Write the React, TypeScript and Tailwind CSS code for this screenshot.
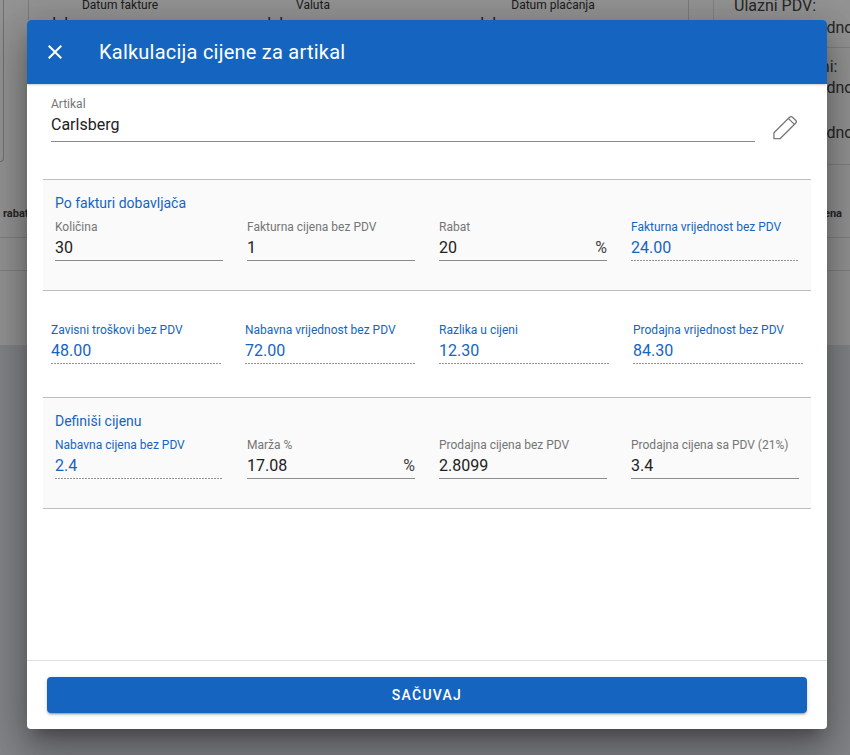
const FIRST_ROW = [
  { label: "Količina", value: "30" },
  { label: "Fakturna cijena bez PDV", value: "1" },
  { label: "Rabat", value: "20", suffix: "%" },
  { label: "Fakturna vrijednost bez PDV", value: "24.00", computed: true },
];

const SECOND_ROW = [
  { label: "Zavisni troškovi bez PDV", value: "48.00", computed: true },
  { label: "Nabavna vrijednost bez PDV", value: "72.00", computed: true },
  { label: "Razlika u cijeni", value: "12.30", computed: true },
  { label: "Prodajna vrijednost bez PDV", value: "84.30", computed: true },
];

const THIRD_ROW = [
  { label: "Nabavna cijena bez PDV", value: "2.4", computed: true },
  { label: "Marža %", value: "17.08", suffix: "%" },
  { label: "Prodajna cijena bez PDV", value: "2.8099" },
  { label: "Prodajna cijena sa PDV (21%)", value: "3.4" },
];

type FieldProps = {
  label: string;
  value: string;
  suffix?: string;
  computed?: boolean;
  tall?: boolean;
};

function Field({ label, value, suffix, computed, tall }: FieldProps) {
  return (
    <div className="min-w-0">
      <div
        className={`h-[15px] text-xs leading-[15px] whitespace-nowrap ${
          computed ? "text-[#1565c0]" : "text-[#757575]"
        }`}
      >
        {label}
      </div>
      <div
        className={`mt-[1px] flex h-[24px] items-center justify-between text-base leading-[24px] ${
          computed ? "text-[#1565c0]" : "text-[#212121]"
        } ${tall ? "mb-[4px]" : ""}`}
      >
        <span>{value}</span>
        {suffix && <span className="text-[#424242]">{suffix}</span>}
      </div>
      {computed ? (
        <div className="h-px bg-[linear-gradient(to_right,rgba(0,0,0,0.42)_66%,transparent_0%)] bg-[length:3px_1px] bg-repeat-x" />
      ) : (
        <div className="h-px bg-[#8c8c8c]" />
      )}
    </div>
  );
}

function Backdrop() {
  return (
    <div className="flex h-[755px] flex-col overflow-hidden bg-[#e4e6ec] font-['Roboto',sans-serif] text-[#333]">
      <div className="flex h-[165px] bg-white">
        <div className="h-[162px] w-[4px] shrink-0 rounded-br border-r border-b border-[#c4c4c4]" />
        <div className="ml-[24px] flex h-full w-[661px] shrink-0 border-x border-[#d6d6d6] text-xs">
          <div className="ml-[18px] w-[146px]">
            <div className="text-center leading-[11px]">Datum fakture</div>
            <div className="mt-[5px] text-base leading-[16px] tracking-[3px]">dd.mm</div>
          </div>
          <div className="ml-[69px] w-[102px]">
            <div className="text-center leading-[11px]">Valuta</div>
            <div className="mt-[5px] text-base leading-[16px] tracking-[3px]">dd.mm</div>
          </div>
          <div className="ml-[111px] w-[156px]">
            <div className="text-center leading-[11px]">Datum plaćanja</div>
            <div className="mt-[5px] text-base leading-[16px] tracking-[3px]">dd.mm</div>
          </div>
        </div>
        <div className="ml-[24px] flex-1 whitespace-nowrap border-b border-l border-[#e0e0e0] text-base text-[#444]">
          <div className="h-[48px] border-b border-[#e0e0e0]">
            <div className="ml-[20px] h-[18px] leading-[12px]">Ulazni PDV:</div>
            <div className="ml-[83px] leading-[20px]">vrijednost</div>
          </div>
          <div className="ml-[74px] mt-[9px] leading-[20px]">Izlazni:</div>
          <div className="ml-[83px] mt-[1px] leading-[20px]">vrijednost</div>
          <div className="ml-[83px] mt-[25px] leading-[20px]">vrijednost</div>
        </div>
      </div>
      <div className="flex h-[73px] items-start justify-between border-b border-[#e0e0e0] bg-white pt-[42px] pr-[8px] pl-[3px] text-[11px] leading-[13px] font-bold text-[#444]">
        <span>rabat</span>
        <span>cijena</span>
      </div>
      <div className="h-[33px] border-b border-[#e0e0e0] bg-white" />
      <div className="h-[74px] bg-white" />
    </div>
  );
}

export default function App() {
  return (
    <div className="relative h-[755px] w-[850px] overflow-hidden">
      <Backdrop />

      {/* dialog */}
      <div className="absolute inset-0 bg-black/[0.42] pt-[20px] pl-[27px] font-['Roboto',sans-serif]">
        <div className="flex h-[709px] w-[800px] flex-col overflow-hidden rounded bg-white shadow-[0_11px_15px_-7px_rgba(0,0,0,0.28),0_24px_38px_3px_rgba(0,0,0,0.2),0_9px_46px_8px_rgba(0,0,0,0.18)]">
          <div className="flex h-[64px] shrink-0 items-center bg-[#1565c0] pl-[16px] text-white shadow-[0_1px_2px_rgba(0,0,0,0.2)]">
            <svg viewBox="0 0 24 24" className="h-6 w-6 fill-white">
              <path d="M19 6.41L17.59 5 12 10.59 6.41 5 5 6.41 10.59 12 5 17.59 6.41 19 12 13.41 17.59 19 19 17.59 13.41 12z" />
            </svg>
            <h1 className="ml-[32px] text-xl tracking-[0.23px]">Kalkulacija cijene za artikal</h1>
          </div>

          <div className="flex-1 px-[16px]">
            <div className="flex items-start pt-[13px] pr-[13px] pl-[8px]">
              <div className="flex-1">
                <Field label="Artikal" value="Carlsberg" tall />
              </div>
              <svg
                viewBox="0 0 26 26"
                className="mt-[18px] ml-[18px] h-[25px] w-[25px] fill-none stroke-[#7a7a7a] stroke-[1.4]"
              >
                <path d="M1 18.5L17.2 2.3c.9-.9 2.2-.9 3.1 0l3.2 3.2c.9.9.9 2.2 0 3.1L7.5 24.5H1z" />
                <path d="M16 3.5l6.5 6.5" />
              </svg>
            </div>

            <section className="mt-[37px] h-[112px] border-y border-[#bdbdbd] bg-[#fafafa] px-[12px] pt-[13px]">
              <h2 className="h-[20px] text-sm leading-[20px] text-[#1565c0]">Po fakturi dobavljača</h2>
              <div className="mt-[7px] grid grid-cols-4 gap-x-[24px]">
                {FIRST_ROW.map((f) => (
                  <Field key={f.label} {...f} />
                ))}
              </div>
            </section>

            <section className="h-[106px] px-[8px] pt-[32px]">
              <div className="grid grid-cols-4 gap-x-[24px]">
                {SECOND_ROW.map((f) => (
                  <Field key={f.label} {...f} />
                ))}
              </div>
            </section>

            <section className="h-[112px] border-y border-[#bdbdbd] bg-[#fafafa] px-[12px] pt-[13px]">
              <h2 className="h-[20px] text-sm leading-[20px] text-[#1565c0]">Definiši cijenu</h2>
              <div className="mt-[7px] grid grid-cols-4 gap-x-[24px]">
                {THIRD_ROW.map((f) => (
                  <Field key={f.label} {...f} />
                ))}
              </div>
            </section>
          </div>

          <div className="shrink-0 border-t border-[#e0e0e0] px-[20px] pt-[16px] pb-[16px]">
            <button className="h-[36px] w-full rounded bg-[#1565c0] text-sm font-medium tracking-[1.25px] text-white uppercase shadow-[0_3px_1px_-2px_rgba(0,0,0,0.2),0_2px_2px_0_rgba(0,0,0,0.14),0_1px_5px_0_rgba(0,0,0,0.12)]">
              Sačuvaj
            </button>
          </div>
        </div>
      </div>
    </div>
  );
}
